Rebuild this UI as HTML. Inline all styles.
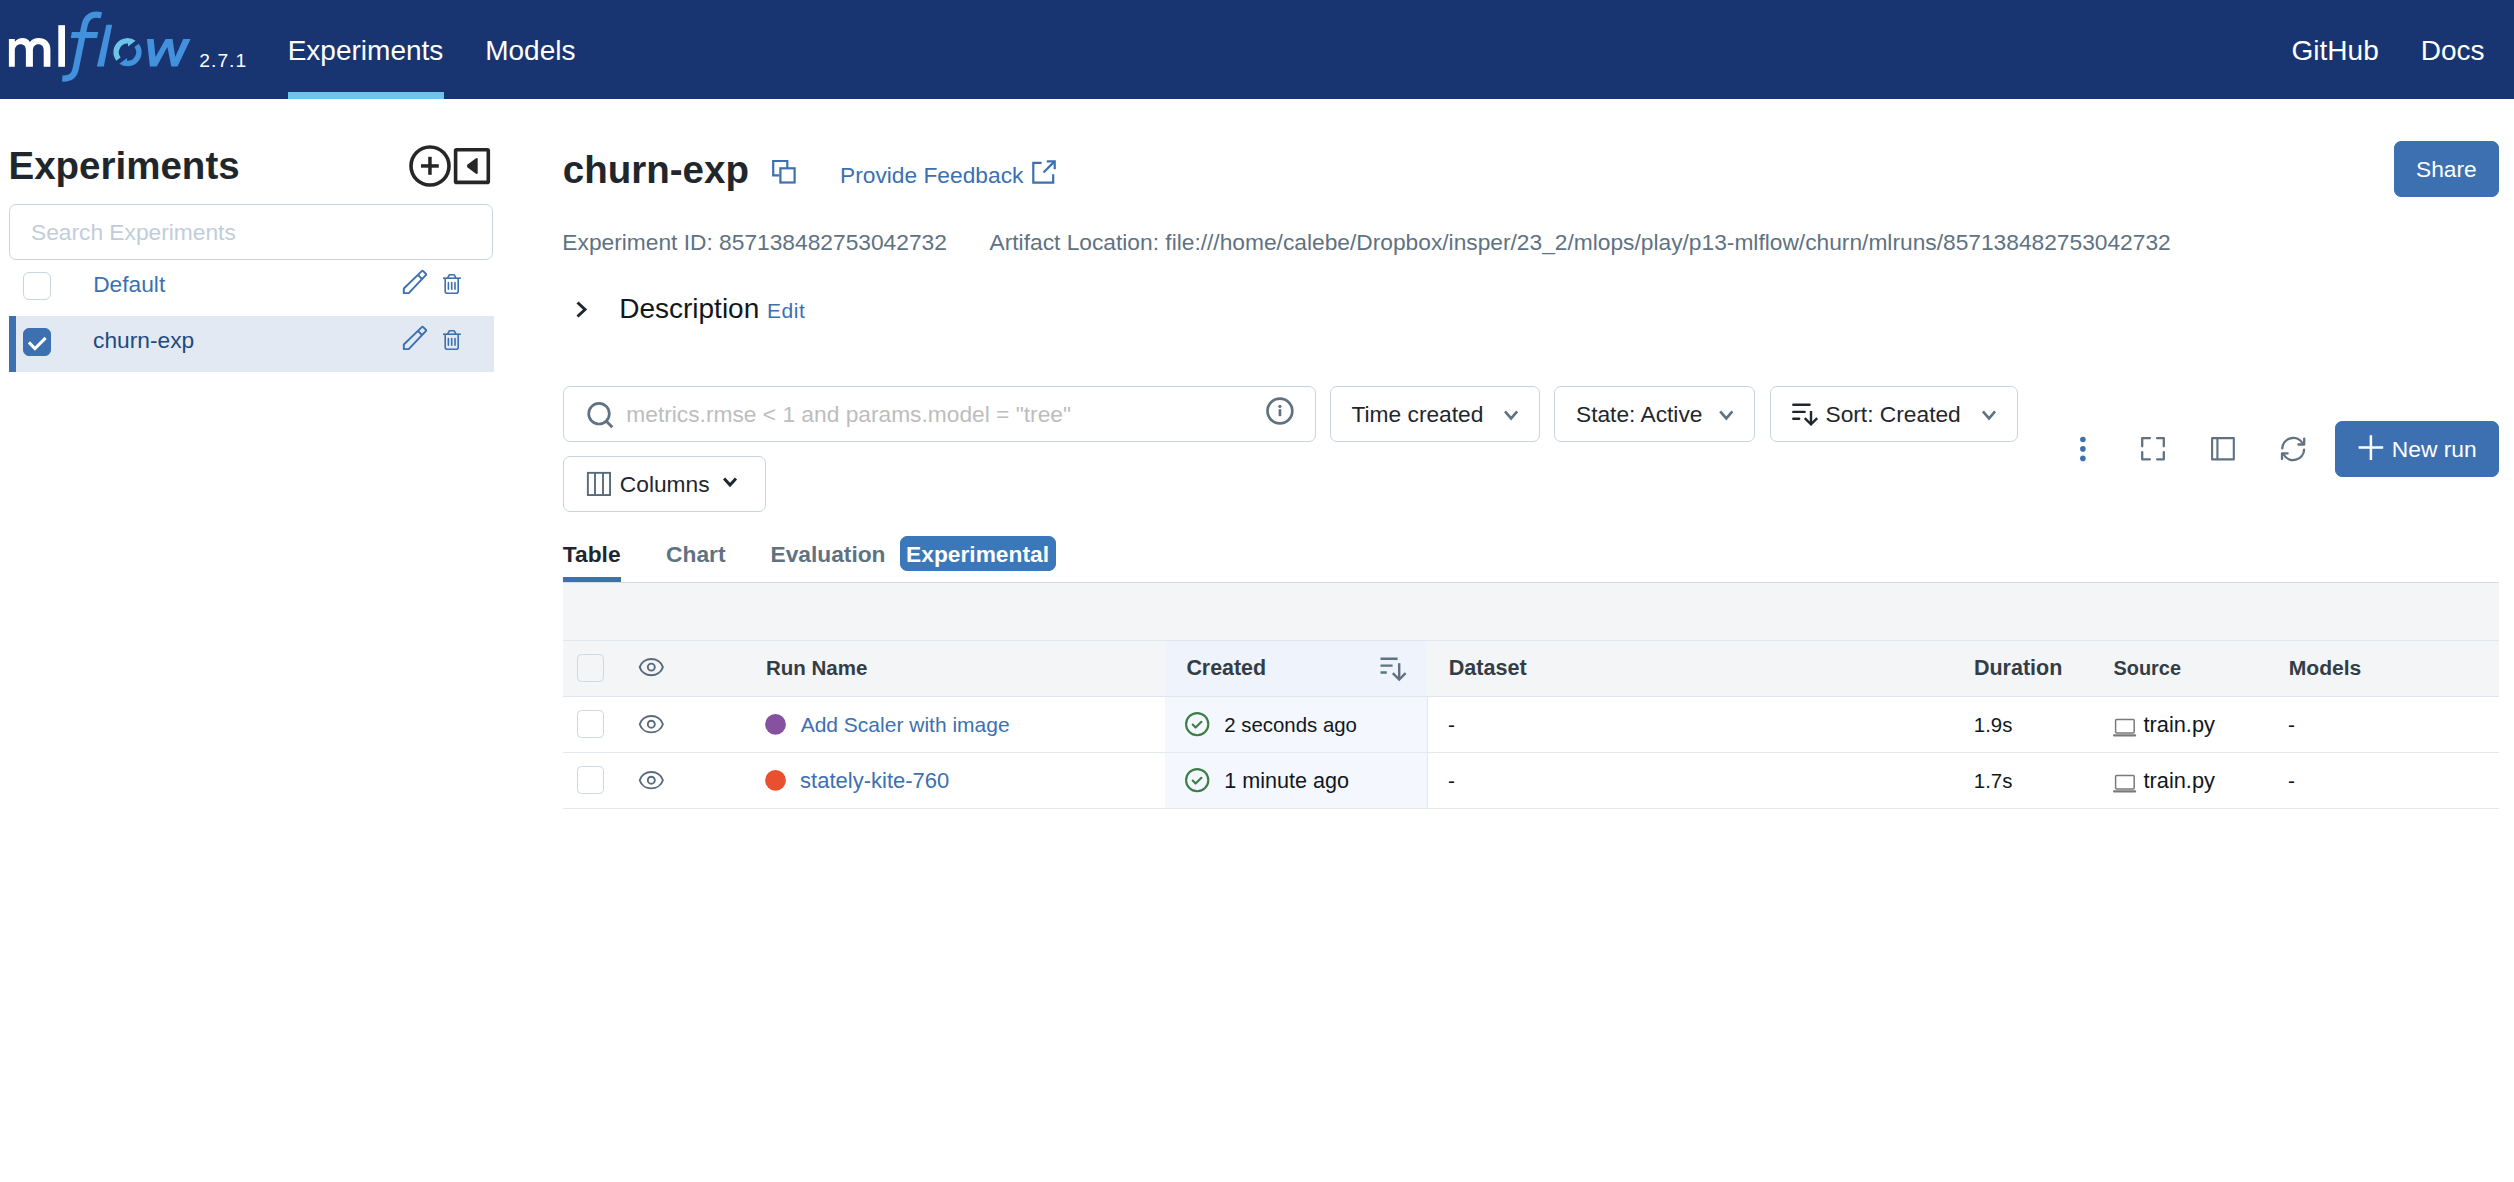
<!DOCTYPE html>
<html><head><meta charset="utf-8"><title>MLflow</title>
<style>
html,body{margin:0;padding:0;background:#fff;}
body{width:2514px;height:1182px;position:relative;overflow:hidden;font-family:"Liberation Sans",sans-serif;}
.t{position:absolute;white-space:pre;}
.r{position:absolute;}
svg{position:absolute;left:0;top:0;}
</style></head><body>
<div class="r" style="left:0.00px;top:0.00px;width:2514.00px;height:99.00px;background:#183572;"></div>
<div class="r" style="left:288.00px;top:92.00px;width:156.00px;height:7.00px;background:#6ec4e9;"></div>
<div class="t" style="left:199.33px;top:51px;font-size:19.25px;line-height:19.25px;color:#ffffff;letter-spacing:1.00px;">2.7.1</div>
<div class="t" style="left:287.70px;top:37px;font-size:28.00px;line-height:28.00px;color:#ffffff;">Experiments</div>
<div class="t" style="left:485.20px;top:37px;font-size:28.00px;line-height:28.00px;color:#ffffff;">Models</div>
<div class="t" style="left:2291.59px;top:37px;font-size:28.00px;line-height:28.00px;color:#ffffff;">GitHub</div>
<div class="t" style="left:2420.70px;top:37px;font-size:28.00px;line-height:28.00px;color:#ffffff;">Docs</div>
<div class="t" style="left:8.52px;top:147px;font-size:38.50px;line-height:38.50px;color:#1f272d;font-weight:700;">Experiments</div>
<div class="r" style="left:9.00px;top:204.00px;width:484.00px;height:56.00px;box-sizing:border-box;border:1px solid #c9d3df;border-radius:7px;background:transparent;"></div>
<div class="t" style="left:30.97px;top:221px;font-size:22.75px;line-height:22.75px;color:#c1cddb;">Search Experiments</div>
<div class="r" style="left:9.00px;top:316.00px;width:485.00px;height:56.00px;background:#e2e9f3;"></div>
<div class="r" style="left:9.00px;top:316.00px;width:7.00px;height:56.00px;background:#3c70b0;"></div>
<div class="r" style="left:23.00px;top:272.00px;width:27.50px;height:27.50px;box-sizing:border-box;border:1.5px solid #c9d4de;border-radius:6px;background:#fff;"></div>
<div class="r" style="left:23.00px;top:328.00px;width:27.50px;height:27.50px;box-sizing:border-box;border:1px solid #3c70b0;border-radius:6px;background:#3c70b0;"></div>
<div class="t" style="left:93.13px;top:273px;font-size:22.75px;line-height:22.75px;color:#3c70b0;">Default</div>
<div class="t" style="left:93.03px;top:329px;font-size:22.75px;line-height:22.75px;color:#1e4a80;">churn-exp</div>
<div class="t" style="left:562.80px;top:151px;font-size:38.50px;line-height:38.50px;color:#1f272d;font-weight:700;">churn-exp</div>
<div class="t" style="left:840.03px;top:164px;font-size:22.75px;line-height:22.75px;color:#3c70b0;">Provide Feedback</div>
<div class="r" style="left:2394.00px;top:141.00px;width:105.00px;height:56.00px;box-sizing:border-box;border:1px solid #3c70b0;border-radius:7px;background:#3c70b0;"></div>
<div class="t" style="left:2415.97px;top:158px;font-size:22.75px;line-height:22.75px;color:#ffffff;">Share</div>
<div class="t" style="left:562.33px;top:231px;font-size:22.75px;line-height:22.75px;color:#5f7281;">Experiment ID: 857138482753042732</div>
<div class="t" style="left:989.56px;top:231px;font-size:22.75px;line-height:22.75px;color:#5f7281;">Artifact Location: file:///home/calebe/Dropbox/insper/23_2/mlops/play/p13-mlflow/churn/mlruns/857138482753042732</div>
<div class="t" style="left:619.20px;top:295px;font-size:28.00px;line-height:28.00px;color:#11171c;">Description</div>
<div class="t" style="left:766.98px;top:300px;font-size:21.00px;line-height:21.00px;color:#3c70b0;letter-spacing:0.60px;">Edit</div>
<div class="r" style="left:563.00px;top:386.00px;width:753.00px;height:56.00px;box-sizing:border-box;border:1px solid #c9d3dd;border-radius:7px;background:#fff;"></div>
<div class="t" style="left:626.29px;top:403px;font-size:22.75px;line-height:22.75px;color:#bdbdbd;">metrics.rmse &lt; 1 and params.model = &quot;tree&quot;</div>
<div class="r" style="left:1330.00px;top:386.00px;width:210.00px;height:56.00px;box-sizing:border-box;border:1px solid #c9d3dd;border-radius:7px;background:#fff;"></div>
<div class="t" style="left:1351.49px;top:403px;font-size:22.75px;line-height:22.75px;color:#1f272d;">Time created</div>
<div class="r" style="left:1554.00px;top:386.00px;width:200.50px;height:56.00px;box-sizing:border-box;border:1px solid #c9d3dd;border-radius:7px;background:#fff;"></div>
<div class="t" style="left:1575.97px;top:403px;font-size:22.75px;line-height:22.75px;color:#1f272d;">State: Active</div>
<div class="r" style="left:1769.50px;top:386.00px;width:248.00px;height:56.00px;box-sizing:border-box;border:1px solid #c9d3dd;border-radius:7px;background:#fff;"></div>
<div class="t" style="left:1825.47px;top:403px;font-size:22.75px;line-height:22.75px;color:#1f272d;">Sort: Created</div>
<div class="r" style="left:2335.20px;top:421.00px;width:163.80px;height:55.50px;box-sizing:border-box;border:1px solid #3c70b0;border-radius:7px;background:#3c70b0;"></div>
<div class="t" style="left:2391.83px;top:438px;font-size:22.75px;line-height:22.75px;color:#ffffff;">New run</div>
<div class="r" style="left:563.00px;top:456.00px;width:203.00px;height:56.00px;box-sizing:border-box;border:1px solid #c9d3dd;border-radius:7px;background:#fff;"></div>
<div class="t" style="left:619.84px;top:473px;font-size:22.75px;line-height:22.75px;color:#1f272d;">Columns</div>
<div class="t" style="left:562.84px;top:543px;font-size:22.75px;line-height:22.75px;color:#1f272d;font-weight:700;">Table</div>
<div class="t" style="left:666.07px;top:543px;font-size:22.75px;line-height:22.75px;color:#5f7281;font-weight:700;">Chart</div>
<div class="t" style="left:770.48px;top:543px;font-size:22.75px;line-height:22.75px;color:#5f7281;font-weight:700;">Evaluation</div>
<div class="r" style="left:899.90px;top:536.20px;width:155.80px;height:34.40px;box-sizing:border-box;border:1px solid #3b78b9;border-radius:7px;background:#3b78b9;"></div>
<div class="t" style="left:906.08px;top:543px;font-size:22.75px;line-height:22.75px;color:#ffffff;font-weight:700;">Experimental</div>
<div class="r" style="left:563.00px;top:582.00px;width:1935.50px;height:1.00px;background:#d3dbe3;"></div>
<div class="r" style="left:563.00px;top:577.00px;width:58.00px;height:5.00px;background:#3c70b0;"></div>
<div class="r" style="left:563.00px;top:583.00px;width:1935.50px;height:113.00px;background:#f3f5f7;"></div>
<div class="r" style="left:563.00px;top:640.00px;width:1935.50px;height:1.00px;background:#dfe6ed;"></div>
<div class="r" style="left:1165.20px;top:641.00px;width:262.30px;height:55.00px;background:#eff4fc;"></div>
<div class="r" style="left:563.00px;top:696.00px;width:1935.50px;height:1.00px;background:#dfe6ed;"></div>
<div class="r" style="left:1165.20px;top:697.00px;width:262.30px;height:111.00px;background:#f4f7fd;"></div>
<div class="r" style="left:1427.00px;top:697.00px;width:1.00px;height:111.00px;background:#e3e8ee;"></div>
<div class="r" style="left:563.00px;top:752.00px;width:1935.50px;height:1.00px;background:#e4e9ee;"></div>
<div class="r" style="left:563.00px;top:808.00px;width:1935.50px;height:1.00px;background:#e4e9ee;"></div>
<div class="r" style="left:576.60px;top:654.00px;width:27.80px;height:27.80px;box-sizing:border-box;border:1.8px solid #cfd9e3;border-radius:4.5px;background:transparent;"></div>
<div class="t" style="left:766.03px;top:658px;font-size:20.50px;line-height:20.50px;color:#333d46;font-weight:700;">Run Name</div>
<div class="t" style="left:1186.42px;top:658px;font-size:21.40px;line-height:21.40px;color:#333d46;font-weight:700;">Created</div>
<div class="t" style="left:1448.76px;top:657px;font-size:21.60px;line-height:21.60px;color:#333d46;font-weight:700;">Dataset</div>
<div class="t" style="left:1973.96px;top:658px;font-size:21.50px;line-height:21.50px;color:#333d46;font-weight:700;">Duration</div>
<div class="t" style="left:2113.53px;top:659px;font-size:19.90px;line-height:19.90px;color:#333d46;font-weight:700;">Source</div>
<div class="t" style="left:2288.69px;top:657px;font-size:21.10px;line-height:21.10px;color:#333d46;font-weight:700;">Models</div>
<div class="r" style="left:576.60px;top:710.00px;width:27.80px;height:27.80px;box-sizing:border-box;border:1.8px solid #cfd9e3;border-radius:4.5px;background:#fff;"></div>
<div class="t" style="left:800.66px;top:714px;font-size:21.00px;line-height:21.00px;color:#3c70b0;">Add Scaler with image</div>
<div class="t" style="left:1224.27px;top:715px;font-size:20.40px;line-height:20.40px;color:#11171c;">2 seconds ago</div>
<div class="t" style="left:1448.07px;top:714px;font-size:21.00px;line-height:21.00px;color:#11171c;">-</div>
<div class="t" style="left:1973.85px;top:715px;font-size:20.40px;line-height:20.40px;color:#11171c;">1.9s</div>
<div class="t" style="left:2143.47px;top:714px;font-size:21.80px;line-height:21.80px;color:#11171c;">train.py</div>
<div class="t" style="left:2288.07px;top:714px;font-size:21.00px;line-height:21.00px;color:#11171c;">-</div>
<div class="r" style="left:576.60px;top:766.00px;width:27.80px;height:27.80px;box-sizing:border-box;border:1.8px solid #cfd9e3;border-radius:4.5px;background:#fff;"></div>
<div class="t" style="left:800.09px;top:770px;font-size:22.00px;line-height:22.00px;color:#3c70b0;">stately-kite-760</div>
<div class="t" style="left:1224.25px;top:770px;font-size:21.60px;line-height:21.60px;color:#11171c;">1 minute ago</div>
<div class="t" style="left:1448.07px;top:770px;font-size:21.00px;line-height:21.00px;color:#11171c;">-</div>
<div class="t" style="left:1973.85px;top:771px;font-size:20.40px;line-height:20.40px;color:#11171c;">1.7s</div>
<div class="t" style="left:2143.47px;top:770px;font-size:21.80px;line-height:21.80px;color:#11171c;">train.py</div>
<div class="t" style="left:2288.07px;top:770px;font-size:21.00px;line-height:21.00px;color:#11171c;">-</div>
<svg width="2514" height="1182" viewBox="0 0 2514 1182">
<path fill="#fff" d="M8.9 66.8 L8.9 38.9 L14.8 38.9 L14.8 41.8 C16.6 39.3 19.4 37.9 22.6 37.9 C25.9 37.9 28.5 39.4 29.9 42 C31.8 39.4 34.9 37.9 38.5 37.9 C45.6 37.9 50.4 42 50.4 49.5 L50.4 66.8 L43.7 66.8 L43.7 50.5 C43.7 46.4 41.8 44.3 38.3 44.3 C35 44.3 32.9 46.6 32.9 50.6 L32.9 66.8 L25.9 66.8 L25.9 50.5 C25.9 46.4 24 44.3 20.6 44.3 C17.2 44.3 14.8 46.7 14.8 50.8 L14.8 66.8 Z"/>
<rect fill="#fff" x="58.3" y="25.2" width="6.7" height="41.6"/>
<path fill="none" stroke="#4391dc" stroke-width="6.3" d="M101.4 15.3 C92 13.2 86.2 16.5 84.3 26.5 L75.8 68.5 C74.2 76.2 70.2 79 62.3 78.6"/>
<polygon fill="#4391dc" points="71.9,31.9 98.3,31.9 97.0,37.9 70.8,37.9"/>
<polygon fill="#4391dc" points="106.4,24.7 112.2,24.7 103.8,66.5 96.9,66.5"/>
<path fill="#6cc4e8" d="M116.24 60.69 A14.1 14.1 0 0 1 135.59 40.65 L128 46.5 L128 43.6 A8.6 8.6 0 0 0 120.63 57.38 Z"/>
<path fill="#4391dc" d="M138.76 43.71 A14.1 14.1 0 0 1 119.41 63.75 L127 57.9 L127 60.8 A8.6 8.6 0 0 0 134.37 47.02 Z"/>
<polygon fill="#4391dc" points="146.9,39.1 153.7,39.1 155.5,57 165.6,39.1 172.5,39.1 175.2,57 183.2,39.1 190.6,39.1 177.5,66.6 171.3,66.6 167.4,47.1 156.7,66.6 149.9,66.6"/>
<circle cx="430" cy="166" r="19" fill="none" stroke="#262626" stroke-width="3.6"/>
<rect x="421" y="164.2" width="17.8" height="3.5" fill="#262626"/><rect x="428.2" y="156.8" width="3.5" height="18" fill="#262626"/>
<rect x="455.6" y="149.7" width="32.7" height="32.7" rx="1" fill="none" stroke="#262626" stroke-width="3.6"/>
<path d="M467.6 164.6 L476 158.3 Q477.7 157.4 477.7 159.3 L477.7 172.7 Q477.7 174.6 476 173.7 L467.6 167.4 Q466.2 166 467.6 164.6 Z" fill="#262626"/>
<path d="M28.9 342.4 L34.9 348.6 L45.6 337.9" fill="none" stroke="#fff" stroke-width="3" stroke-linecap="butt" stroke-linejoin="miter"/>
<g transform="translate(0 0)" fill="none" stroke="#3c70b0" stroke-width="1.95" stroke-linejoin="round"><path d="M403.8 288.5 L421.8 271.1 Q422.5 270.4 423.2 271.1 L425.8 273.7 Q426.5 274.4 425.8 275.1 L408.7 293.1 L403.8 293.1 Z"/><path d="M417.9 274.9 L421.8 278.8"/></g>
<g transform="translate(0 0)" fill="none" stroke="#3c70b0" stroke-width="1.6" stroke-linejoin="round"><path d="M443 278.2 L460.8 278.2"/><path d="M447.6 278 L449.3 274.8 L454.2 274.8 L455.9 278"/><path d="M445.2 278.3 L445.2 291.2 Q445.2 293.2 447.2 293.2 L456.2 293.2 Q458.2 293.2 458.2 291.2 L458.2 278.3"/><path d="M448.4 282.5 L448.4 289.3 M451.7 282.5 L451.7 289.3 M455 282.5 L455 289.3" stroke-linecap="round"/></g>
<g transform="translate(0 56)" fill="none" stroke="#3c70b0" stroke-width="1.95" stroke-linejoin="round"><path d="M403.8 288.5 L421.8 271.1 Q422.5 270.4 423.2 271.1 L425.8 273.7 Q426.5 274.4 425.8 275.1 L408.7 293.1 L403.8 293.1 Z"/><path d="M417.9 274.9 L421.8 278.8"/></g>
<g transform="translate(0 56)" fill="none" stroke="#3c70b0" stroke-width="1.6" stroke-linejoin="round"><path d="M443 278.2 L460.8 278.2"/><path d="M447.6 278 L449.3 274.8 L454.2 274.8 L455.9 278"/><path d="M445.2 278.3 L445.2 291.2 Q445.2 293.2 447.2 293.2 L456.2 293.2 Q458.2 293.2 458.2 291.2 L458.2 278.3"/><path d="M448.4 282.5 L448.4 289.3 M451.7 282.5 L451.7 289.3 M455 282.5 L455 289.3" stroke-linecap="round"/></g>
<g fill="none" stroke="#3c70b0" stroke-width="2.2"><path d="M779.4 175.4 L773.2 175.4 L773.2 161 L787.3 161 L787.3 168.3"/><rect x="780.4" y="168.3" width="14.2" height="14.2"/></g>
<g fill="none" stroke="#3c70b0" stroke-width="2.2"><path d="M1041.6 162.8 L1033.3 162.8 L1033.3 182.6 L1053.2 182.6 L1053.2 174.3"/><path d="M1043.5 172.5 L1054.6 161.4"/><path d="M1046.8 161.4 L1054.7 161.4 L1054.7 169.3"/></g>
<path d="M577.5 302.5 L585 309.5 L577.5 316.5" fill="none" stroke="#1f272d" stroke-width="3"/>
<circle cx="599" cy="413.7" r="10.3" fill="none" stroke="#5f7281" stroke-width="2.7"/>
<path d="M606.6 421.4 L612.3 427.2" stroke="#5f7281" stroke-width="2.9" fill="none"/>
<circle cx="1279.9" cy="411" r="12.4" fill="none" stroke="#5f7281" stroke-width="2.7"/>
<circle cx="1279.9" cy="406.4" r="1.6" fill="#5f7281"/><rect x="1278.6" y="409.2" width="2.7" height="7" fill="#5f7281"/>
<path d="M1505.00 411.40 L1511.10 418.40 L1517.20 411.40" fill="none" stroke="#5f7281" stroke-width="2.6"/>
<path d="M1720.20 411.40 L1726.30 418.40 L1732.40 411.40" fill="none" stroke="#5f7281" stroke-width="2.6"/>
<g fill="none" stroke="#1f272d" stroke-width="2.4"><path d="M1793.3 404.7 L1809.6 404.7 M1793.3 411.9 L1804.6 411.9 M1793.3 418.8 L1799.2 418.8" stroke-linecap="round"/><path d="M1811 411 L1811 424.2"/><path d="M1804.8 418.2 L1811 424.4 L1817.2 418.2"/></g>
<path d="M1982.90 411.40 L1989.00 418.40 L1995.10 411.40" fill="none" stroke="#5f7281" stroke-width="2.6"/>
<circle cx="2082.9" cy="439.5" r="2.8" fill="#3c70b0"/>
<circle cx="2082.9" cy="448.9" r="2.8" fill="#3c70b0"/>
<circle cx="2082.9" cy="458.4" r="2.8" fill="#3c70b0"/>
<g fill="none" stroke="#5f7281" stroke-width="2.3" stroke-linecap="round" stroke-linejoin="round"><path d="M2142.2 446.3 L2142.2 438.2 L2149.9 438.2 M2157.1 438.2 L2163.8 438.2 L2163.8 446.3 M2163.8 452.2 L2163.8 459.3 L2157.1 459.3 M2149.9 459.3 L2142.2 459.3 L2142.2 452.2"/></g>
<g fill="none" stroke="#5f7281" stroke-width="2.1" stroke-linejoin="round"><rect x="2212.1" y="438.1" width="21.7" height="21.3"/><path d="M2217.4 438.1 L2217.4 459.4"/></g>
<g fill="none" stroke="#5f7281" stroke-width="2.3" stroke-linecap="round" stroke-linejoin="round"><path d="M2282.3 448.4 A10.9 10.9 0 0 1 2302.4 443"/><path d="M2304.1 449.6 A10.9 10.9 0 0 1 2284 455"/><path d="M2304.2 438.6 L2304.2 444.5 L2298.4 444.5"/><path d="M2282 459 L2282 453.4 L2287.6 453.4"/></g>
<path d="M2370.9 435.3 L2370.9 459.9 M2358.6 447.6 L2383.2 447.6" stroke="#fff" stroke-width="2.5" fill="none"/>
<g fill="none" stroke="#586a7c" stroke-width="1.9"><rect x="587.85" y="472.85" width="22.2" height="22.2"/><path d="M595 472.9 L595 495.1 M603 472.9 L603 495.1"/></g>
<path d="M724.10 478.60 L730.05 485.10 L736.00 478.60" fill="none" stroke="#1f272d" stroke-width="3"/>
<g fill="none" stroke="#586a7b" stroke-width="1.9" stroke-linejoin="round"><path d="M639.70 667.10 C643.10 656.20 659.50 656.20 662.90 667.10 C659.50 678.00 643.10 678.00 639.70 667.10 Z"/><circle cx="651.30" cy="667.10" r="3.5"/></g>
<g fill="none" stroke="#5f7281" stroke-width="2.4"><path d="M1380.5 658.7 L1397.6 658.7 M1380.5 665.6 L1392.6 665.6 M1380.5 672.5 L1386.8 672.5"/><path d="M1399.2 663.2 L1399.2 679.3"/><path d="M1392.8 673.1 L1399.2 679.5 L1405.6 673.1"/></g>
<g fill="none" stroke="#586a7b" stroke-width="1.9" stroke-linejoin="round"><path d="M639.70 724.20 C643.10 713.30 659.50 713.30 662.90 724.20 C659.50 735.10 643.10 735.10 639.70 724.20 Z"/><circle cx="651.30" cy="724.20" r="3.5"/></g>
<circle cx="775.5" cy="724.40" r="10.4" fill="#86519e"/>
<circle cx="1197.2" cy="724.20" r="11.1" fill="none" stroke="#3b7d46" stroke-width="2.1"/>
<path d="M1192.7 724.60 L1195.6 727.60 L1201.4 721.80" fill="none" stroke="#3b7d46" stroke-width="2.1" stroke-linecap="round" stroke-linejoin="round"/>
<g><rect x="2115.6" y="719.60" width="18.6" height="13.4" rx="1" fill="none" stroke="#7a7a7a" stroke-width="1.5"/><rect x="2113" y="734.30" width="23.2" height="2.3" rx="1.1" fill="#7a7a7a"/></g>
<g fill="none" stroke="#586a7b" stroke-width="1.9" stroke-linejoin="round"><path d="M639.70 780.20 C643.10 769.30 659.50 769.30 662.90 780.20 C659.50 791.10 643.10 791.10 639.70 780.20 Z"/><circle cx="651.30" cy="780.20" r="3.5"/></g>
<circle cx="775.5" cy="780.40" r="10.4" fill="#e8502f"/>
<circle cx="1197.2" cy="780.20" r="11.1" fill="none" stroke="#3b7d46" stroke-width="2.1"/>
<path d="M1192.7 780.60 L1195.6 783.60 L1201.4 777.80" fill="none" stroke="#3b7d46" stroke-width="2.1" stroke-linecap="round" stroke-linejoin="round"/>
<g><rect x="2115.6" y="775.60" width="18.6" height="13.4" rx="1" fill="none" stroke="#7a7a7a" stroke-width="1.5"/><rect x="2113" y="790.30" width="23.2" height="2.3" rx="1.1" fill="#7a7a7a"/></g>
</svg>
<script>(function(){var w=window.innerWidth;if(w&&Math.abs(w-2514)>4){document.documentElement.style.zoom=(w/2514);}})();</script>
</body></html>
